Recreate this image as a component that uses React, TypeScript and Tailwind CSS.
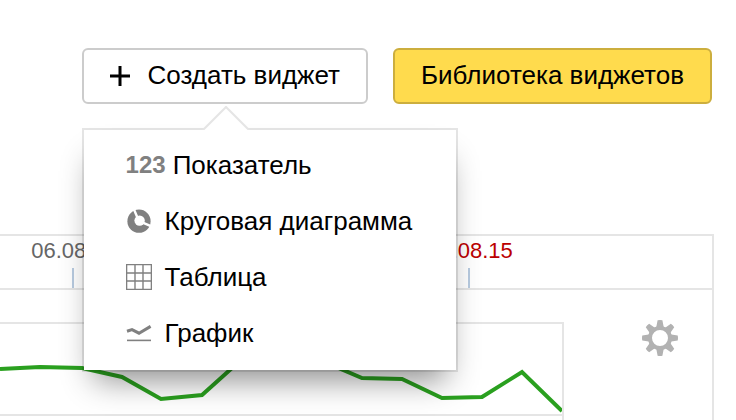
import type { ReactNode } from 'react';
import { clsx } from 'clsx';

interface MenuItem {
  label: string;
  icon: ReactNode;
}

interface TimelineMark {
  date: string;
  holiday?: boolean;
}

const PlusIcon = () => (
  <svg className="h-5 w-5" viewBox="0 0 20 20" aria-hidden="true">
    <path d="M10 0v20M0 10h20" stroke="#000" strokeWidth="3" />
  </svg>
);

const DonutIcon = () => (
  <svg className="h-[26px] w-[26px]" viewBox="0 0 26 26" aria-hidden="true">
    <circle cx="13" cy="13.2" r="11.6" fill="#808080" />
    <circle cx="13.6" cy="12.6" r="5.2" fill="#fff" />
    <path d="M12 11L7.4 0M13.8 13.4L26 18.6" stroke="#fff" strokeWidth="2.4" />
  </svg>
);

const TableIcon = () => (
  <svg className="h-[26px] w-[26px]" viewBox="0 0 26 26" aria-hidden="true">
    <path d="M.6 .6h24.8v24.8H.6zM9 0v26M17 0v26M0 9h26M0 17h26" fill="none" stroke="#808080" strokeWidth="1.4" />
  </svg>
);

const GraphIcon = () => (
  <svg className="h-[26px] w-[26px]" viewBox="0 0 26 26" aria-hidden="true">
    <path d="M1 11.2L6 9.6L13 13.2L24.6 6.4" fill="none" stroke="#808080" strokeWidth="3" />
    <path d="M1 20.4h24" stroke="#808080" strokeWidth="1.6" />
  </svg>
);

const GearIcon = () => (
  <svg className="h-9 w-9" viewBox="0 0 36 36" aria-hidden="true">
    <g fill="#b2b2b2">
      {[0, 45, 90, 135, 180, 225, 270, 315].map((angle) => (
        <path key={angle} d="M13 9L14.4 6.6L15.6 0.3Q18 -0.3 20.4 0.3L21.6 6.6L23 9z" transform={`rotate(${angle} 18 18)`} />
      ))}
    </g>
    <circle cx="18" cy="18" r="10" fill="none" stroke="#b2b2b2" strokeWidth="4" />
  </svg>
);

const menuItems: MenuItem[] = [
  {
    label: 'Показатель',
    icon: <span className="-mr-1.5 text-2xl font-bold text-[#808080]">123</span>,
  },
  { label: 'Круговая диаграмма', icon: <DonutIcon /> },
  { label: 'Таблица', icon: <TableIcon /> },
  { label: 'График', icon: <GraphIcon /> },
];

const timeline: TimelineMark[] = [
  { date: '06.08.15' },
  { date: '08.08.15', holiday: true },
];

const CreateMenu = () => (
  <div className="absolute top-full left-0 z-10 mt-[26px] ml-[2px] bg-white py-2 shadow-[0_0_0_2px_rgba(0,0,0,0.1),0_20px_30px_-10px_rgba(0,0,0,0.45)]">
    <svg className="absolute bottom-full left-[118px] h-6 w-12" viewBox="0 0 48 24" aria-hidden="true">
      <path d="M1 24L24 1L47 24z" fill="#fff" />
      <path d="M1 24L24 1L47 24" fill="none" stroke="#e5e5e5" strokeWidth="2" />
    </svg>
    <ul>
      {menuItems.map(({ label, icon }) => (
        <li key={label}>
          <button type="button" className="flex h-14 w-full items-center gap-[13px] pr-11 pb-0.5 pl-[42px] whitespace-nowrap">
            {icon}
            <span>{label}</span>
          </button>
        </li>
      ))}
    </ul>
  </div>
);

const Chart = () => (
  <div className="mt-8 flex-1 border-t-2 border-r-2 border-[#e5e5e5]">
    <svg className="block h-[90px] w-full" viewBox="0 0 562 90" preserveAspectRatio="none" aria-hidden="true">
      <polyline
        points="0,45 40,43 82,44 122,53 161,75 202,71 242,35 282,26 322,37 362,54 402,55 442,74 482,73 522,48 562,87"
        fill="none"
        stroke="#2aa01f"
        strokeWidth="4"
      />
    </svg>
    <div className="border-t-2 border-[#e5e5e5]" />
  </div>
);

export default function App() {
  return (
    <div className="flex min-h-screen flex-col bg-white font-['Liberation_Sans',Arial,sans-serif] text-[26px] leading-8 text-black">
      <header className="flex justify-end gap-[25px] pt-12 pr-6 pb-[130px]">
        <div className="relative">
          <button type="button" className="flex h-14 items-center gap-[18px] rounded-md border-2 border-[#ccc] px-[26px] whitespace-nowrap">
            <PlusIcon />
            <span className="pb-0.5">Создать виджет</span>
          </button>
          <CreateMenu />
        </div>
        <button type="button" className="h-14 rounded-md border-2 border-[#ccae3e] bg-[#ffdb4d] px-[26px] pb-0.5 whitespace-nowrap">
          Библиотека виджетов
        </button>
      </header>

      <main className="mr-[22px] flex flex-1 flex-col border-t-2 border-r-2 border-[#e5e5e5]">
        <div className="flex gap-[250px] overflow-hidden border-b-2 border-[#e5e5e5] text-[22px]">
          {timeline.map(({ date, holiday }) => (
            <div key={date} className="flex w-[146px] shrink-0 flex-col items-center">
              <span className={clsx('h-8 pl-0.5 leading-[30px]', holiday ? 'text-[#b00]' : 'text-[#666]')}>{date}</span>
              <span className="h-5 w-[2px] bg-[#b8cbe0]" />
            </div>
          ))}
        </div>

        <div className="flex flex-1">
          <Chart />
          <div className="flex w-[148px] items-start justify-center pt-[30px] pl-11">
            <button type="button" aria-label="Настройки">
              <GearIcon />
            </button>
          </div>
        </div>
      </main>
    </div>
  );
}
